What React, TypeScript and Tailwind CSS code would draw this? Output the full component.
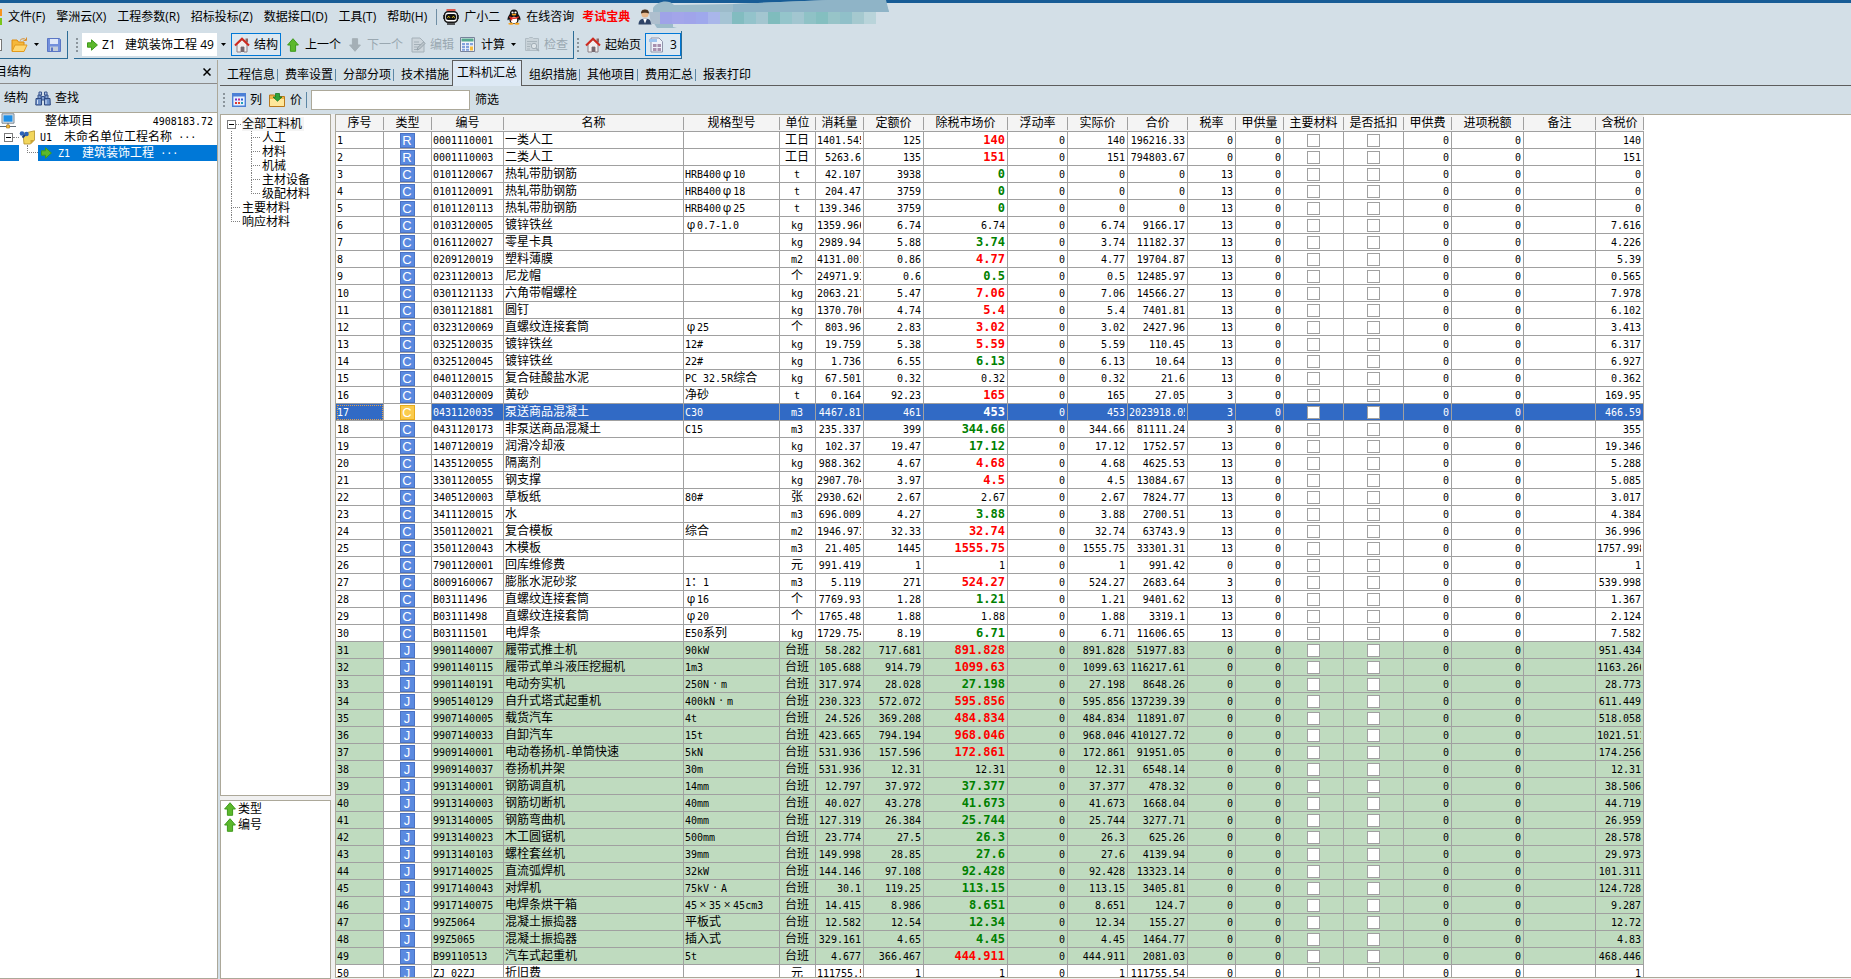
import React from 'react';

const SANS = "font-['Open_Sans','Noto_Sans_CJK_SC',sans-serif]";

/* ---------- icons ---------- */

const UpArrow = () => (
  <svg width="12" height="14" viewBox="0 0 12 14" className="shrink-0">
    <path d="M6 .7 11.4 7H8.6v6.3H3.4V7H.6z" fill="#5cb82c" stroke="#3f9a1c" />
  </svg>
);
const DownArrow = () => (
  <svg width="12" height="14" viewBox="0 0 12 14" className="shrink-0">
    <path d="M6 13.3.6 7h2.8V.7h5.2V7h2.8z" fill="#a4afb6" stroke="#a4afb6" />
  </svg>
);
const RightArrow = () => (
  <svg width="11" height="12" viewBox="0 0 11 12" className="shrink-0">
    <path d="M.5 3.8h4V.8L10.4 6l-5.9 5.2v-3h-4z" fill="#5cb82c" stroke="#3f9a1c" />
  </svg>
);
const Caret = () => (
  <svg width="5" height="3" viewBox="0 0 5 3" className="shrink-0">
    <path d="M0 0h5L2.5 3z" fill="#000" />
  </svg>
);
const House = () => (
  <svg width="16" height="16" viewBox="0 0 16 16" className="shrink-0">
    <path d="M3 7v8h4v-5h3v5h3V7L8 2.5z" fill="#f1eeee" stroke="#8b8086" />
    <path d="M7 10h3v5H7z" fill="#76696f" />
    <path d="M11.5 1.5H14v4h-2.5z" fill="#8d6a68" />
    <path d="M1 8.6 8 1.8l7 6.8" fill="none" stroke="#cf2a1f" strokeWidth="2.1" />
  </svg>
);
const Folder = () => (
  <svg width="17" height="16" viewBox="0 0 17 16" className="shrink-0">
    <path d="M1 3h5l1.5 2H13v9H1z" fill="#f5b83a" stroke="#dc8b10" />
    <path d="M4 8h12l-3 6.5H1z" fill="#ffd873" stroke="#e39a1c" />
    <path d="M9 3.5c1.5-2 4-2.4 6-.8M15.5.5v3h-3" fill="none" stroke="#d98d2a" />
  </svg>
);
const Floppy = () => (
  <svg width="14" height="14" viewBox="0 0 14 14" className="shrink-0">
    <path d="M.5.5h12l1 1v12H.5z" fill="#7390dc" stroke="#5a76c4" />
    <path d="M3 1h8v5H3z" fill="#dfe8f8" />
    <path d="M3 8.500h8V13H3z" fill="#c3cdda" />
    <path d="M4 9.500h2V13H4z" fill="#5a76c4" />
  </svg>
);
const EditDoc = () => (
  <svg width="15" height="16" viewBox="0 0 15 16" className="shrink-0">
    <path d="M1 1h8l4 4v10H1z" fill="#ccd5db" stroke="#a4b0b8" />
    <path d="M3 5h5M3 7.500h7M3 10h5M3 12.500h4" stroke="#a4b0b8" />
    <path d="m6 13 .8-2.500L12.500 5 14 6.500 8.500 12z" fill="#bcc6cc" stroke="#96a3ab" />
  </svg>
);
const Calculator = () => (
  <svg width="15" height="15" viewBox="0 0 15 15" className="shrink-0">
    <path d="M.5.5h14v14H.5z" fill="#f1f4fa" stroke="#77829b" />
    <path d="M1.500 1.500h12v3h-12z" fill="#55a98f" />
    <path d="M2 6h3v2.200H2zM6 6h3v2.200H6zM10 6h3v2.200h-3zM2 9h3v2H2zM6 9h3v2H6z" fill="#83a3dd" />
    <path d="M2 11.800h3v2H2zM6 11.800h3v2H6z" fill="#83a3dd" />
    <path d="M10 9.500h3v4h-3z" fill="#f6bd3f" />
  </svg>
);
const CheckDoc = () => (
  <svg width="15" height="15" viewBox="0 0 15 15" className="shrink-0">
    <path d="M.5 1.500h3l1-1h3l1 1h5v12H.5z" fill="#c9d3d9" stroke="#b0bcc4" />
    <path d="M2 4.500h10M2 7h4M2 9.500h3M2 12h3" stroke="#a9b5bc" />
    <circle cx="9" cy="9" r="2.700" fill="#dde4e8" stroke="#a2aeb6" />
    <path d="m11 11 3 3" stroke="#a2aeb6" strokeWidth="1.500" />
  </svg>
);
const Report = () => (
  <svg width="15" height="16" viewBox="0 0 15 16" className="shrink-0">
    <path d="M2 1h8l3.500 3.500V15H2z" fill="#eef2fa" stroke="#8f94ab" />
    <path d="M0 2h8v3H0z" fill="#9cc4ef" />
    <path d="M4 7h3.500v3H4zM8.500 7H12v3H8.500zM4 11h3.500v3H4zM8.500 11H12v3H8.500z" fill="#a78fae" />
  </svg>
);
const Robot = () => (
  <svg width="16" height="16" viewBox="0 0 16 16" className="shrink-0">
    <path d="M3.500 1h9" stroke="#e03a2a" strokeWidth="1.600" />
    <rect x="1.500" y="2.800" width="13" height="10.400" rx="3.500" fill="#fff" stroke="#151515" strokeWidth="1.500" />
    <rect x="3" y="5" width="10" height="6" rx="2" fill="#111" />
    <path d="m4.500 8.800 1.200-1.600 1.200 1.600M9.200 8.800l1.200-1.600 1.200 1.600" fill="none" stroke="#f5d21a" />
    <path d="M4 15h8" stroke="#222" strokeWidth="1.500" />
    <path d="M.7 6v4M15.300 6v4" stroke="#222" />
  </svg>
);
const Penguin = () => (
  <svg width="16" height="16" viewBox="0 0 16 16" className="shrink-0">
    <path d="M8 .5c2.800 0 4.200 2 4.200 4.500 1.300 1.700 2.600 4 2.200 6-.5.700-1.200-.4-1.600-.9C12.500 13.500 11 15 8 15s-4.500-1.500-4.800-4.900c-.4.500-1.100 1.600-1.600.9-.4-2 .9-4.300 2.200-6C3.800 2.500 5.200.5 8 .5z" fill="#151515" />
    <ellipse cx="8" cy="11" rx="3.200" ry="3.200" fill="#fff" />
    <circle cx="6.500" cy="3.500" r="1.100" fill="#fff" />
    <circle cx="9.500" cy="3.500" r="1.100" fill="#fff" />
    <ellipse cx="8" cy="5.600" rx="2.300" ry=".9" fill="#f9a21b" />
    <path d="M3.500 7.200c3 1.600 6 1.600 9 0l.3 1.500c-3 1.700-6.600 1.700-9.600 0z" fill="#e62a1d" />
    <path d="M4.500 8.800h1.800v2.600H4.500z" fill="#e62a1d" />
    <ellipse cx="5" cy="14.800" rx="2.600" ry="1" fill="#f9a21b" />
    <ellipse cx="11" cy="14.800" rx="2.600" ry="1" fill="#f9a21b" />
  </svg>
);
const Person = () => (
  <svg width="14" height="16" viewBox="0 0 14 16" className="shrink-0">
    <circle cx="7" cy="5" r="3.600" fill="#e8b88c" />
    <path d="M3 4.500C3 1 5 .5 7 .5s4 .5 4 4C9 3.500 5 3.500 3 4.500z" fill="#4a3320" />
    <path d="M.5 15.500c0-4 2.500-6 6.500-6s6.500 2 6.500 6z" fill="#2f4467" />
    <path d="m5 9.500 2 5 2-5z" fill="#fff" />
  </svg>
);
const Binoculars = () => (
  <svg width="16" height="15" viewBox="0 0 16 15" className="shrink-0">
    <path d="M3 4h3v4H3zM10 4h3v4h-3zM6.500 5.500h3V9h-3z" fill="#7f9fd0" stroke="#38548c" />
    <path d="M4 1h2.500v3H4zM9.500 1H12v3H9.500z" fill="#a9c0e4" stroke="#38548c" />
    <path d="M1 7.500h5.500V14H.8zM9.500 7.500H15l.3 6.500H9.500z" fill="#6d90c8" stroke="#2e4980" />
    <path d="M2.500 9v4M11 9v4" stroke="#d5e2f6" />
  </svg>
);
const Columns = () => (
  <svg width="14" height="14" viewBox="0 0 14 14" className="shrink-0">
    <path d="M.7.7h12.600v12.600H.7z" fill="#e8f1ff" stroke="#4b7fd6" strokeWidth="1.400" />
    <path d="M.7.7h12.600v2.800H.7z" fill="#4b7fd6" />
    <path d="M3 5.500h2v2H3z" fill="#6b35c9" />
    <path d="M6 5.500h2v2H6z" fill="#c22f86" />
    <path d="M9 5.500h2v2H9z" fill="#2f5fd0" />
    <path d="M3 9h2v2H3z" fill="#d33" />
    <path d="M6 9h2v2H6z" fill="#e04a2a" />
    <path d="M9 9h2v2H9z" fill="#21a0b8" />
  </svg>
);
const PriceFolder = () => (
  <svg width="16" height="14" viewBox="0 0 16 14" className="shrink-0">
    <path d="M.5 2h5l1 1.500h9v10H.5z" fill="#f0b54a" stroke="#b9781c" />
    <path d="M1 6h14v7H1z" fill="#ffe79a" />
    <path d="M6.500.5h4v3.500H13L8.500 8.200 4 4h2.500z" fill="#2fa33a" stroke="#187a25" strokeWidth=".8" />
  </svg>
);
const Computer = () => (
  <svg width="16" height="16" viewBox="0 0 16 16" className="shrink-0">
    <path d="M2 .8h12v9.400H2z" fill="#e2e6ea" stroke="#7a8894" />
    <path d="M3.500 2.300h9v6.400h-9z" fill="#1f8fe6" />
    <path d="M8 10v3M0 13.500h16" stroke="#5f6c76" />
    <path d="M6.500 12h3v3h-3z" fill="#f3b93c" stroke="#b9801a" strokeWidth=".7" />
  </svg>
);
const Note = () => (
  <svg width="16" height="15" viewBox="0 0 16 15" className="shrink-0">
    <path d="M4 3.500 15.500.8V10l-4 4H5z" fill="#f2d65c" stroke="#b4912a" strokeWidth=".8" />
    <path d="M15.500 10h-4v4z" fill="#c9a235" />
    <circle cx="3" cy="3.500" r="2.300" fill="#2c62b8" />
    <circle cx="7.500" cy="4" r="2.300" fill="#2c62b8" />
    <path d="M3.500 7.500 6 5" stroke="#1d3f80" strokeWidth="2" />
  </svg>
);

/* colours of the censor strip over the account name, left to right */
const STRIP = ['#9fa3e8', '#a3a5ea', '#a0a4ea', '#9fa8ec', '#a9b6ea', '#a5c4d4', '#82bcc0', '#93c3cb', '#a3c6d0', '#7fbcbd', '#94c5cb', '#a2c6d0', '#8fc2c6', '#84bfc0', '#97c4c8', '#90c0c9', '#a5c9cf', '#b9d4da'];

const Smear = () => (
  <svg width="240" height="28" viewBox="0 0 240 28" className="pointer-events-none absolute left-[649px] top-0">
    <path d="M4 8C8 1 20-1 25 5l60-1L180 0h56l4 12H190v12h-50l-10-1-60 1H40l-16 4H8L4 22z" fill="#9cbbca" />
    <path d="M24 12h216v15H24z" fill="#d3dfe7" />
    {STRIP.map((c, i) => (
      <rect key={i} x={11 + i * 12} y="12" width="12" height="12" fill={c} />
    ))}
    <path d="M0 12h11v12H2z" fill="#aebfce" />
    <path d="M84 4 180 0h57l3 12H84z" fill="#8fb4c7" />
  </svg>
);

/* ---------- text helpers ---------- */

/* Latin runs are set half as wide as the Chinese characters beside them; φ, × and · take a full cell. */
const Runs = ({ text }: { text: string }) => (
  <>
    {text.split(/([\x20-\x7e]+|·{3}|[φ×·])/).map((part, i) => {
      if (!part) return null;
      if (/^[φ×·]$/.test(part)) return <span key={i} className="inline-block w-3 text-center leading-none">{part}</span>;
      if (i % 2) return <span key={i} className="font-['DejaVu_Sans_Mono',monospace] text-[10px] leading-none">{part}</span>;
      return <span key={i}>{part}</span>;
    })}
  </>
);

const Grip = () => (
  <span className="flex shrink-0 flex-col gap-[2px]">
    {[0, 1, 2, 3].map((i) => (
      <span key={i} className="size-[2px] bg-[#8b959c]" />
    ))}
  </span>
);

const MinusBox = () => (
  <button aria-label="折叠" className="flex size-[9px] shrink-0 items-center justify-center border border-[#7b7b7b] bg-white">
    <span className="h-px w-[5px] bg-black" />
  </button>
);

/* ---------- table data ---------- */

const COLS: [string, string][] = [
  ['序号', 'w-[48px]'], ['类型', 'w-[48px]'], ['编号', 'w-[72px]'], ['名称', 'w-[180px]'], ['规格型号', 'w-[96px]'],
  ['单位', 'w-[36px]'], ['消耗量', 'w-[48px]'], ['定额价', 'w-[60px]'], ['除税市场价', 'w-[84px]'], ['浮动率', 'w-[60px]'],
  ['实际价', 'w-[60px]'], ['合价', 'w-[60px]'], ['税率', 'w-[48px]'], ['甲供量', 'w-[48px]'], ['主要材料', 'w-[60px]'],
  ['是否抵扣', 'w-[60px]'], ['甲供费', 'w-[48px]'], ['进项税额', 'w-[72px]'], ['备注', 'w-[72px]'], ['含税价', 'w-[48px]'],
];

/* type|code|name|spec|unit|quantity|quota price|market price|trend|total|tax rate|price with tax */
const DATA = `R|0001110001|一类人工||工日|1401.545|125|140|+|196216.33|0|140
R|0001110003|二类人工||工日|5263.6|135|151|+|794803.67|0|151
C|0101120067|热轧带肋钢筋|HRB400φ10|t|42.107|3938|0|-|0|13|0
C|0101120091|热轧带肋钢筋|HRB400φ18|t|204.47|3759|0|-|0|13|0
C|0101120113|热轧带肋钢筋|HRB400φ25|t|139.346|3759|0|-|0|13|0
C|0103120005|镀锌铁丝|φ0.7-1.0|kg|1359.966|6.74|6.74||9166.17|13|7.616
C|0161120027|零星卡具||kg|2989.94|5.88|3.74|-|11182.37|13|4.226
C|0209120019|塑料薄膜||m2|4131.001|0.86|4.77|+|19704.87|13|5.39
C|0231120013|尼龙帽||个|24971.93|0.6|0.5|-|12485.97|13|0.565
C|0301121133|六角带帽螺栓||kg|2063.211|5.47|7.06|+|14566.27|13|7.978
C|0301121881|圆钉||kg|1370.706|4.74|5.4|+|7401.81|13|6.102
C|0323120069|直螺纹连接套筒|φ25|个|803.96|2.83|3.02|+|2427.96|13|3.413
C|0325120035|镀锌铁丝|12#|kg|19.759|5.38|5.59|+|110.45|13|6.317
C|0325120045|镀锌铁丝|22#|kg|1.736|6.55|6.13|-|10.64|13|6.927
C|0401120015|复合硅酸盐水泥|PC 32.5R综合|kg|67.501|0.32|0.32||21.6|13|0.362
C|0403120009|黄砂|净砂|t|0.164|92.23|165|+|27.05|3|169.95
C|0431120035|泵送商品混凝土|C30|m3|4467.81|461|453|-|2023918.05|3|466.59
C|0431120173|非泵送商品混凝土|C15|m3|235.337|399|344.66|-|81111.24|3|355
C|1407120019|润滑冷却液||kg|102.37|19.47|17.12|-|1752.57|13|19.346
C|1435120055|隔离剂||kg|988.362|4.67|4.68|+|4625.53|13|5.288
C|3301120055|钢支撑||kg|2907.704|3.97|4.5|+|13084.67|13|5.085
C|3405120003|草板纸|80#|张|2930.626|2.67|2.67||7824.77|13|3.017
C|3411120015|水||m3|696.009|4.27|3.88|-|2700.51|13|4.384
C|3501120021|复合模板|综合|m2|1946.973|32.33|32.74|+|63743.9|13|36.996
C|3501120043|木模板||m3|21.405|1445|1555.75|+|33301.31|13|1757.998
C|7901120001|回库维修费||元|991.419|1|1||991.42|0|1
C|8009160067|膨胀水泥砂浆|1：1|m3|5.119|271|524.27|+|2683.64|3|539.998
C|B03111496|直螺纹连接套筒|φ16|个|7769.93|1.28|1.21|-|9401.62|13|1.367
C|B03111498|直螺纹连接套筒|φ20|个|1765.48|1.88|1.88||3319.1|13|2.124
C|B03111501|电焊条|E50系列|kg|1729.754|8.19|6.71|-|11606.65|13|7.582
J|9901140007|履带式推土机|90kW|台班|58.282|717.681|891.828|+|51977.83|0|951.434
J|9901140115|履带式单斗液压挖掘机|1m3|台班|105.688|914.79|1099.63|+|116217.61|0|1163.266
J|9901140191|电动夯实机|250N·m|台班|317.974|28.028|27.198|-|8648.26|0|28.773
J|9905140129|自升式塔式起重机|400kN·m|台班|230.323|572.072|595.856|+|137239.39|0|611.449
J|9907140005|载货汽车|4t|台班|24.526|369.208|484.834|+|11891.07|0|518.058
J|9907140033|自卸汽车|15t|台班|423.665|794.194|968.046|+|410127.72|0|1021.511
J|9909140001|电动卷扬机-单筒快速|5kN|台班|531.936|157.596|172.861|+|91951.05|0|174.256
J|9909140037|卷扬机井架|30m|台班|531.936|12.31|12.31||6548.14|0|12.31
J|9913140001|钢筋调直机|14mm|台班|12.797|37.972|37.377|-|478.32|0|38.506
J|9913140003|钢筋切断机|40mm|台班|40.027|43.278|41.673|-|1668.04|0|44.719
J|9913140005|钢筋弯曲机|40mm|台班|127.319|26.384|25.744|-|3277.71|0|26.959
J|9913140023|木工圆锯机|500mm|台班|23.774|27.5|26.3|-|625.26|0|28.578
J|9913140103|螺栓套丝机|39mm|台班|149.998|28.85|27.6|-|4139.94|0|29.973
J|9917140025|直流弧焊机|32kW|台班|144.146|97.108|92.428|-|13323.14|0|101.311
J|9917140043|对焊机|75kV·A|台班|30.1|119.25|113.15|-|3405.81|0|124.728
J|9917140075|电焊条烘干箱|45×35×45cm3|台班|14.415|8.986|8.651|-|124.7|0|9.287
J|99Z5064|混凝土振捣器|平板式|台班|12.582|12.54|12.34|-|155.27|0|12.72
J|99Z5065|混凝土振捣器|插入式|台班|329.161|4.65|4.45|-|1464.77|0|4.83
J|B99110513|汽车式起重机|5t|台班|4.677|366.467|444.911|+|2081.03|0|468.446
J|ZJ_02ZJ|折旧费||元|111755.54|1|1||111755.54|0|1`;

const ROWS = DATA.split('\n').map((line) => line.split('|'));
const SELECTED = 16;

const CELL = 'h-[17px] overflow-hidden whitespace-nowrap border-b border-r border-[#a0a0a0] p-0 pl-px pr-[2px] leading-4';
const Num = ({ v }: { v: string }) => (
  <td className={`${CELL} text-right`}>
    <div className="overflow-hidden">
      <Runs text={v} />
    </div>
  </td>
);
const Tick = ({ label }: { label: string }) => (
  <td className={CELL}>
    <input type="checkbox" aria-label={label} className="mx-auto block size-[13px] appearance-none border border-[#a0a0a0] bg-white" />
  </td>
);

const Row = ({ r, i }: { r: string[]; i: number }) => {
  const [type, code, name, spec, unit, qty, quota, market, trend, total, rate, taxed] = r;
  const on = i === SELECTED;
  const tone = on ? 'bg-[#316ac5] text-white' : i >= 30 && i < 49 ? 'bg-[#bfdbbf]' : 'bg-white';
  const color = on ? 'text-white' : trend === '+' ? 'text-[#ff0000]' : 'text-[#008000]';
  return (
    <tr className={tone}>
      <td className={`${CELL} ${on ? 'outline-1 -outline-offset-2 outline-dotted outline-[#e0a050]' : ''}`}>
        <Runs text={String(i + 1)} />
      </td>
      <td className={`${CELL} bg-white`}>
        <span
          className={`mx-auto flex size-[15px] items-center justify-center border font-['Liberation_Sans',sans-serif] text-[13px] leading-none text-white ${
            on ? 'border-[#e8ac1c] bg-[#fbcb4d]' : 'border-[#4a72c4] bg-[#5a8ae0]'
          }`}
        >
          {type}
        </span>
      </td>
      <td className={CELL}><Runs text={code} /></td>
      <td className={CELL}><Runs text={name} /></td>
      <td className={CELL}><Runs text={spec} /></td>
      <td className={`${CELL} text-center`}><Runs text={unit} /></td>
      <Num v={qty} />
      <Num v={quota} />
      {trend ? (
        <td className={`${CELL} text-right font-['DejaVu_Sans_Mono',monospace] font-bold ${color}`}>{market}</td>
      ) : (
        <Num v={market} />
      )}
      <Num v="0" />
      <Num v={market} />
      <Num v={total} />
      <Num v={rate} />
      <Num v="0" />
      <Tick label={`主要材料 ${i + 1}`} />
      <Tick label={`是否抵扣 ${i + 1}`} />
      <Num v="0" />
      <Num v="0" />
      <td className={CELL} />
      <Num v={taxed} />
    </tr>
  );
};

/* ---------- category tree ---------- */

const Branch = ({ turn, down }: { turn: boolean; down: boolean }) => (
  <span className="flex w-[20px] shrink-0 flex-col pl-[9px]">
    <span className={`h-[7px] border-l border-dotted border-[#808080] ${turn ? 'w-[9px] border-b' : ''}`} />
    <span className={`h-[7px] border-dotted border-[#808080] ${down ? 'border-l' : ''}`} />
  </span>
);

const CategoryTree = () => (
  <ul className="flex flex-col pl-px pt-[2px] leading-[14px]">
    <li className="flex h-[14px] items-center">
      <span className="flex w-5 items-center pl-[5px]">
        <MinusBox />
        <span className="w-[5px] border-t border-dotted border-[#808080]" />
      </span>
      <span className="bg-[#f4f4f4] pr-[2px]">全部工料机</span>
    </li>
    {['人工', '材料', '机械', '主材设备', '级配材料'].map((t, i) => (
      <li key={t} className="flex h-[14px]">
        <Branch turn={false} down />
        <Branch turn down={i < 4} />
        {t}
      </li>
    ))}
    <li className="flex h-[14px]"><Branch turn down />主要材料</li>
    <li className="flex h-[14px]"><Branch turn down={false} />响应材料</li>
  </ul>
);

/* ---------- bars ---------- */

const MenuBar = () => (
  <nav className="flex h-7 items-center whitespace-nowrap pl-px">
    <svg width="7" height="16" viewBox="0 0 7 16" className="-ml-[5px] mr-[5px] shrink-0">
      <path d="M0 0h6v7H0z" fill="#f7931e" />
      <path d="M0 9h6v7H0z" fill="#7ac51b" />
    </svg>
    <div className="flex gap-[11px]">
      {['文件(F)', '擎洲云(X)', '工程参数(R)', '招标投标(Z)', '数据接口(D)', '工具(T)', '帮助(H)'].map((m) => (
        <button key={m}>{m}</button>
      ))}
    </div>
    <span className="ml-[9px] mr-[6px] h-4 w-px bg-[#6f8ea4]" />
    <button className="flex items-center gap-[5px]"><Robot />广小二</button>
    <button className="ml-[6px] flex items-center gap-1"><Penguin />在线咨询</button>
    <button className="ml-2 font-bold text-[#ff0000]">考试宝典</button>
    <span className="ml-2"><Person /></span>
  </nav>
);

const BOXED = 'flex h-[23px] items-center border border-[#0078d7] bg-[#dce8f1]';

const ToolBar = () => (
  <div className="flex h-[28px] gap-[6px] whitespace-nowrap">
    <div className="flex w-[68px] items-center border-b border-r border-[#2c6c96]">
      <span className="h-3 w-[2px] border-y border-r border-[#777] bg-white" />
      <button aria-label="打开" className="ml-[9px]"><Folder /></button>
      <button aria-label="更多" className="ml-[6px]"><Caret /></button>
      <button aria-label="保存" className="ml-2"><Floppy /></button>
    </div>
    <div className="flex items-center border-b border-r border-[#2c6c96] pl-[2px] pr-[5px]">
      <Grip />
      <div className="relative ml-1 flex h-[23px] w-[147px] items-center bg-white pl-[5px]">
        <RightArrow />
        <select aria-label="单位工程" className="h-full w-[130px] appearance-none bg-transparent pl-1 outline-none">
          <option>{'Z1\u00a0\u00a0\u00a0建筑装饰工程 49'}</option>
        </select>
        <span className="pointer-events-none absolute right-0 top-0 flex h-full w-3 items-center justify-center bg-[#d3dfe7]"><Caret /></span>
      </div>
      <button className={`${BOXED} ml-[2px] gap-1 px-[2px]`}><House />结构</button>
      <button className="ml-[6px] flex items-center gap-[6px]"><UpArrow />上一个</button>
      <button className="ml-2 flex items-center gap-[6px] text-[#9aa8b1]" disabled><DownArrow />下一个</button>
      <button className="ml-2 flex items-center gap-1 text-[#9aa8b1]" disabled><EditDoc />编辑</button>
      <button className="ml-[6px] flex items-center gap-[6px]"><Calculator />计算<Caret /></button>
      <button className="ml-[9px] flex items-center gap-1 text-[#9aa8b1]" disabled><CheckDoc />检查</button>
    </div>
    <div className="-ml-[3px] flex items-center border-b border-r border-[#2c6c96]">
      <Grip />
      <button className="ml-[6px] mr-1 flex items-center gap-1"><House />起始页</button>
      <button className={`${BOXED} gap-[6px] px-[3px]`}><Report />3</button>
    </div>
  </div>
);

const TABS = ['工程信息', '费率设置', '分部分项', '技术措施', '工料机汇总', '组织措施', '其他项目', '费用汇总', '报表打印'];

const Tabs = () => (
  <div role="tablist" className="flex h-[26px] whitespace-nowrap">
    {TABS.map((t, i) =>
      i === 4 ? (
        <button key={t} role="tab" aria-selected className="w-[70px] border border-b-0 border-[#5d5d5d] bg-[#dde9f5] pb-[2px] text-center">{t}</button>
      ) : (
        <button key={t} role="tab" className="flex w-[58px] items-center border-b border-[#5d5d5d] pl-[7px] pt-1">
          {t}
          {i !== 3 && i !== 8 && <span className="ml-[2px] h-3 w-px bg-[#5c87a6]" />}
        </button>
      ),
    )}
    <span className="flex-1 border-b border-[#5d5d5d]" />
  </div>
);

const BOX = 'border border-[#aca899] bg-white';

export default function App() {
  return (
    <div className={`relative flex h-screen flex-col overflow-hidden bg-[#d3dfe7] text-[12px] leading-4 text-black ${SANS}`}>
      <div className="h-[3px] shrink-0 bg-[#175c96]" />
      <MenuBar />
      <ToolBar />
      <Smear />

      <div className="mt-px flex min-h-0 flex-1">
        <aside className="flex w-[218px] shrink-0 flex-col border-r border-[#aca899]">
          <div className="flex h-6 items-center justify-between overflow-hidden border-b border-[#8a8a8a] pr-[6px]">
            <h2 className="-ml-[5px] whitespace-nowrap">目结构</h2>
            <button aria-label="关闭">
              <svg width="8" height="8" viewBox="0 0 8 8"><path d="m.5.5 7 7m0-7-7 7" stroke="#000" strokeWidth="1.500" /></svg>
            </button>
          </div>
          <div className="flex h-7 items-center pl-1">
            <button>结构</button>
            <button className="ml-[7px] flex items-center gap-1"><Binoculars />查找</button>
          </div>
          <div className={`${BOX} min-h-0 flex-1 border-x-0`}>
            <ul>
              <li className="flex h-4 items-center">
                <Computer />
                <span className="ml-[29px] flex-1">整体项目</span>
                <span className="pr-1"><Runs text="4908183.72" /></span>
              </li>
              <li className="flex h-4 items-center whitespace-nowrap pl-1">
                <MinusBox />
                <span className="w-[6px] border-t border-dotted border-[#808080]" />
                <Note />
                <span className="ml-[5px] whitespace-pre"><Runs text={'U1  未命名单位工程名称 ···'} /></span>
              </li>
              <li className="flex h-4 items-stretch">
                <span className="w-[19px] bg-[#0078d7]" />
                <span className="flex w-[19px] flex-col pl-2">
                  <span className="h-2 border-b border-l border-dotted border-[#808080]" />
                </span>
                <span className="flex flex-1 items-center gap-[6px] whitespace-pre bg-[#0078d7] pl-[3px] text-white">
                  <RightArrow />
                  <span><Runs text={'Z1  建筑装饰工程 ···'} /></span>
                </span>
              </li>
            </ul>
          </div>
        </aside>

        <main className="ml-[2px] flex min-w-0 flex-1 flex-col">
          <Tabs />
          <div className="flex h-7 shrink-0 items-center pl-[3px]">
            <Grip />
            <button className="ml-[7px] flex items-center gap-1"><Columns />列</button>
            <button className="ml-[7px] flex items-center gap-[5px]"><PriceFolder />价</button>
            <span className="mx-[4px] h-4 w-px bg-[#5c87a6]" />
            <input id="filter" className="h-5 w-[159px] border border-[#aca899] bg-white px-1 outline-none" />
            <label htmlFor="filter" className="ml-[5px]">筛选</label>
          </div>

          <div className="flex min-h-0 flex-1 gap-1 bg-[#f0f0f0]">
            <div className="flex w-[111px] shrink-0 flex-col gap-1">
              <div className={`${BOX} min-h-0 flex-1`}><CategoryTree /></div>
              <ul className={`${BOX} h-[179px] pl-[3px]`}>
                {['类型', '编号'].map((t) => (
                  <li key={t} className="flex h-4 items-center gap-[2px]"><UpArrow />{t}</li>
                ))}
              </ul>
            </div>
            <div className={`${BOX} mb-px min-w-0 flex-1 overflow-hidden border-r-0`}>
              <table className="w-[1308px] table-fixed border-separate border-spacing-0">
                <thead>
                  <tr className="bg-[#f4f4f4]">
                    {COLS.map(([label, w]) => (
                      <th key={label} className={`${w} h-[17px] border-b border-[#a0a0a0] p-0 font-normal leading-4`}>
                        <div className="flex items-center whitespace-nowrap">
                          <span className="flex-1 text-center">{label}</span>
                          <span className="h-[13px] w-px bg-[#a0a0a0]" />
                        </div>
                      </th>
                    ))}
                  </tr>
                </thead>
                <tbody>
                  {ROWS.map((r, i) => (
                    <Row key={i} r={r} i={i} />
                  ))}
                </tbody>
              </table>
            </div>
          </div>
        </main>
      </div>
    </div>
  );
}
